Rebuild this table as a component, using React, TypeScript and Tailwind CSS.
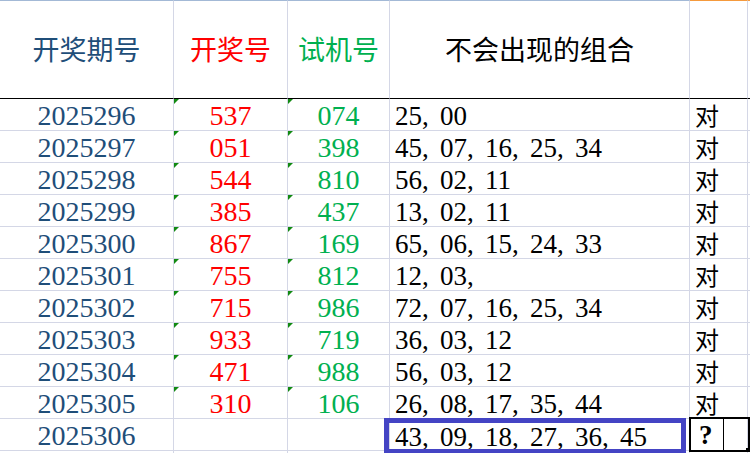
import React from "react";

const rows = [
  { id: "2025296", open: "537", test: "074", combo: "25, 00", mark: "对" },
  { id: "2025297", open: "051", test: "398", combo: "45, 07, 16, 25, 34", mark: "对" },
  { id: "2025298", open: "544", test: "810", combo: "56, 02, 11", mark: "对" },
  { id: "2025299", open: "385", test: "437", combo: "13, 02, 11", mark: "对" },
  { id: "2025300", open: "867", test: "169", combo: "65, 06, 15, 24, 33", mark: "对" },
  { id: "2025301", open: "755", test: "812", combo: "12, 03,", mark: "对" },
  { id: "2025302", open: "715", test: "986", combo: "72, 07, 16, 25, 34", mark: "对" },
  { id: "2025303", open: "933", test: "719", combo: "36, 03, 12", mark: "对" },
  { id: "2025304", open: "471", test: "988", combo: "56, 03, 12", mark: "对" },
  { id: "2025305", open: "310", test: "106", combo: "26, 08, 17, 35, 44", mark: "对" },
];

const serif = { fontFamily: '"Liberation Serif", "Noto Sans CJK SC", serif' };
const cjk = { fontFamily: '"Noto Sans CJK SC", "Liberation Sans", sans-serif' };

// little green "number stored as text" flag
function Flag() {
  return (
    <svg className="absolute left-0 top-0" width="5" height="5" viewBox="0 0 5 5">
      <polygon points="0,0 5,0 0,5" fill="#128a12" />
    </svg>
  );
}

const cell = "relative flex items-center border-r border-b border-[#d4d7e6] h-[32px]";

export default function App() {
  return (
    <div className="w-[750px] h-[453px] overflow-hidden bg-white">
      <div className="grid grid-cols-[174px_114px_102px_300px_58px_2px]">
        {/* header */}
        <div className="h-[99px] flex items-center justify-center border-t border-t-[#a3b9d6] border-r border-r-[#d4d7e6] border-b border-b-black text-[27px] text-[#1f4e79]" style={cjk}>
          开奖期号
        </div>
        <div className="h-[99px] flex items-center justify-center border-t border-t-[#a3b9d6] border-r border-r-[#d4d7e6] border-b border-b-black text-[27px] text-[#ff0000]" style={cjk}>
          开奖号
        </div>
        <div className="h-[99px] flex items-center justify-center border-t border-t-[#a3b9d6] border-r border-r-[#d4d7e6] border-b border-b-black text-[27px] text-[#00b050]" style={cjk}>
          试机号
        </div>
        <div className="h-[99px] flex items-center justify-center border-t border-t-[#a3b9d6] border-r border-r-[#d4d7e6] border-b border-b-black text-[27px] text-black" style={cjk}>
          不会出现的组合
        </div>
        <div className="h-[99px] border-t border-t-[#f59a3c] border-r border-r-[#d4d7e6] border-b border-b-black" />
        <div className="h-[99px] border-t border-t-[#f59a3c] border-b border-b-black" />

        {rows.map((r) => (
          <React.Fragment key={r.id}>
            <div className={`${cell} justify-center text-[28px] text-[#1f4e79] pt-[3px]`} style={serif}>
              {r.id}
            </div>
            <div className={`${cell} justify-center text-[28px] text-[#ff0000] pt-[3px]`} style={serif}>
              <Flag />
              {r.open}
            </div>
            <div className={`${cell} justify-center text-[28px] text-[#00b050] pt-[3px]`} style={serif}>
              <Flag />
              {r.test}
            </div>
            <div className={`${cell} pl-[5px] text-[27px] text-black pt-[3px] whitespace-pre [word-spacing:4.5px]`} style={serif}>
              {r.combo}
            </div>
            <div className={`${cell} pl-[5px] text-[24px] text-black`} style={cjk}>
              {r.mark}
            </div>
            <div className="h-[32px] border-b border-[#d4d7e6]" />
          </React.Fragment>
        ))}

        {/* current row */}
        <div className={`${cell} justify-center text-[28px] text-[#1f4e79] pt-[3px]`} style={serif}>
          2025306
        </div>
        <div className={cell} />
        <div className={cell} />
        <div className={`${cell} pl-[5px] text-[27px] text-black pt-[5px] whitespace-pre [word-spacing:4.5px]`} style={serif}>
          43, 09, 18, 27, 36, 45
          <div className="absolute left-[-6px] top-[-1px] w-[302px] h-[36px] border-[5px] border-[#4444c4]" />
        </div>
        <div className={`${cell} pl-[9px] pt-[2px] text-[27px] font-bold text-black`} style={serif}>
          ?
          <div className="absolute left-[-1px] top-[-2px] w-[61px] h-[35px] border-2 border-black flex">
            <div className="w-[33px] border-r border-black" />
          </div>
          <div className="absolute right-[-3px] bottom-[-2px] w-[4px] h-[4px] bg-black" />
        </div>
        <div className="h-[32px] border-b border-[#d4d7e6]" />

        {/* next (partially visible) row */}
        <div className="h-[32px] border-r border-[#d4d7e6]" />
        <div className="h-[32px] border-r border-[#d4d7e6]" />
        <div className="h-[32px] border-r border-[#d4d7e6]" />
        <div className="h-[32px] border-r border-[#d4d7e6]" />
        <div className="h-[32px] border-r border-[#d4d7e6]" />
        <div className="h-[32px]" />
      </div>
    </div>
  );
}
